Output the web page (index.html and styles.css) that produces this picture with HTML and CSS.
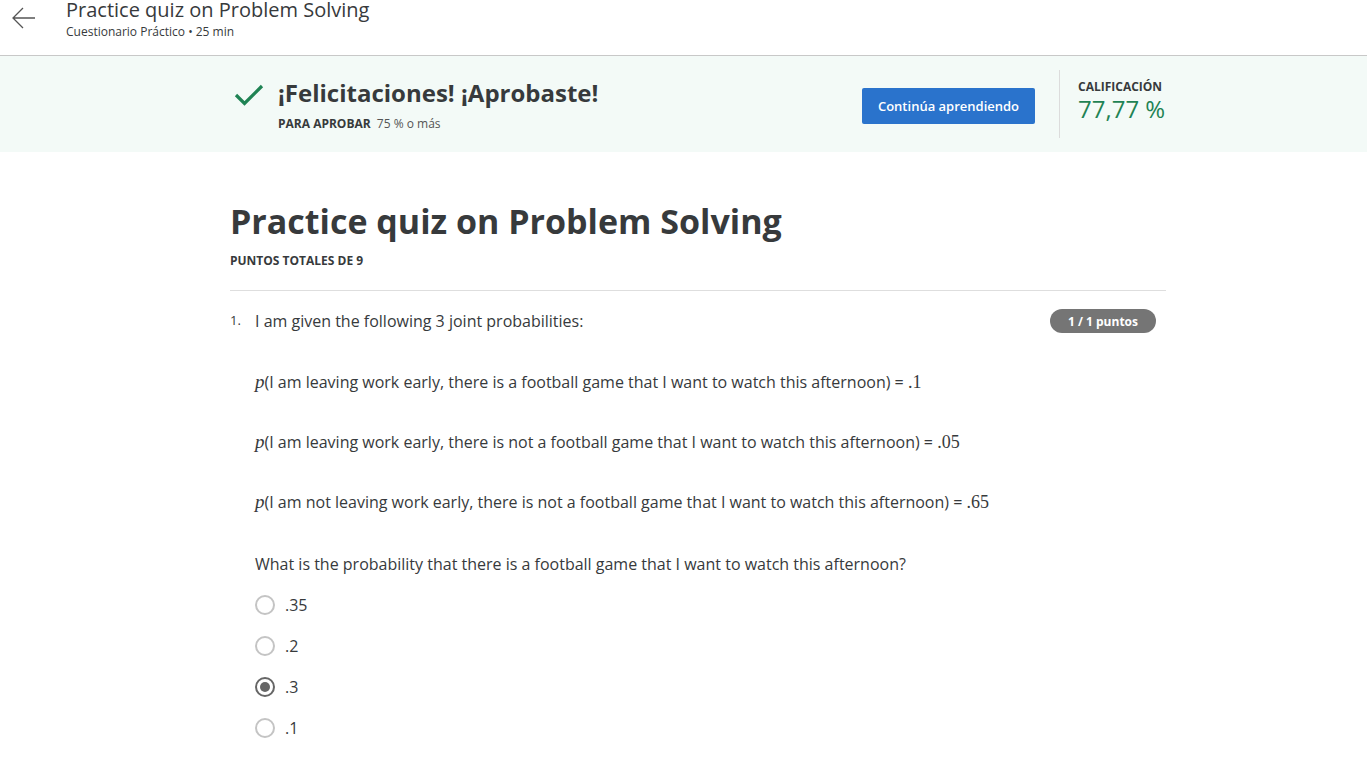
FILE: index.html
```html
<!DOCTYPE html>
<html lang="es">
<head>
<meta charset="utf-8">
<link rel="stylesheet" href="styles.css">
</head>
<body>
<header class="topbar">
  <div class="back">
    <svg width="26" height="24" viewBox="0 0 26 24"><path d="M24 12H2M12 2L2 12l10 10" fill="none" stroke="#555" stroke-width="1.3"/></svg>
  </div>
  <div class="top-titles">
    <div class="top-title">Practice quiz on Problem Solving</div>
    <div class="top-sub">Cuestionario Práctico • 25 min</div>
  </div>
</header>
<section class="banner">
  <div class="banner-inner">
    <div class="pass">
      <svg class="check" width="30" height="22" viewBox="0 0 30 22"><path d="M2 11l8.5 8.5L28 2" fill="none" stroke="#1f8354" stroke-width="3.2"/></svg>
      <div>
        <div class="pass-title">¡Felicitaciones! ¡Aprobaste!</div>
        <div class="pass-req"><b>PARA APROBAR</b> 75 % o más</div>
      </div>
    </div>
    <button class="continue">Continúa aprendiendo</button>
    <div class="divider"></div>
    <div class="grade">
      <div class="grade-label">CALIFICACIÓN</div>
      <div class="grade-value">77,77 %</div>
    </div>
  </div>
</section>
<main class="content">
  <h1 class="quiz-title">Practice quiz on Problem Solving</h1>
  <div class="total">PUNTOS TOTALES DE 9</div>
  <hr class="rule">
  <div class="question">
    <div class="qnum">1.</div>
    <div class="qbody">
      <div class="qhead">
        <p class="qtext">I am given the following 3 joint probabilities:</p>
        <span class="badge">1 / 1 puntos</span>
      </div>
      <p class="prob"><i class="m">p</i>(I am leaving work early, there is a football game that I want to watch this afternoon) = <span class="mn">.1</span></p>
      <p class="prob"><i class="m">p</i>(I am leaving work early, there is not a football game that I want to watch this afternoon) = <span class="mn">.05</span></p>
      <p class="prob"><i class="m">p</i>(I am not leaving work early, there is not a football game that I want to watch this afternoon) = <span class="mn">.65</span></p>
      <p class="ask">What is the probability that there is a football game that I want to watch this afternoon?</p>
      <ul class="options">
        <li class="opt"><span class="radio"></span>.35</li>
        <li class="opt"><span class="radio"></span>.2</li>
        <li class="opt"><span class="radio on"></span>.3</li>
        <li class="opt"><span class="radio"></span>.1</li>
      </ul>
    </div>
  </div>
</main>
</body>
</html>
```

FILE: styles.css
```css
* { box-sizing: border-box; }
html, body { margin: 0; padding: 0; background: #fff; }
body { font-family: "Open Sans", "Noto Sans", sans-serif; color: #373a3c; }

.topbar {
  height: 56px;
  border-bottom: 1px solid #c8c8c8;
  display: flex;
  align-items: flex-start;
}
.back { width: 66px; padding: 6px 0 0 11px; }
.top-title { font-size: 20px; line-height: 22px; color: #373a3c; margin-top: -1px; }
.top-sub { font-size: 12px; line-height: 16px; margin-top: 3px; color: #373a3c; }

.banner { background: #f3faf7; height: 96px; }
.banner-inner {
  width: 936px; margin-left: 230px; height: 100%;
  display: flex; align-items: center;
}
.pass { display: flex; align-items: flex-start; flex: 1; padding-left: 4px; }
.check { margin-top: 7px; margin-right: 14px; }
.pass-title { font-size: 24px; font-weight: 700; line-height: 32px; color: #373a3c; }
.pass-req { font-size: 12px; margin-top: 6px; color: #555; }
.pass-req b { color: #373a3c; margin-right: 3px; }
.continue {
  background: #2a73cc; color: #fff; border: 0; border-radius: 2px;
  font-family: inherit; font-size: 13px; font-weight: 600;
  width: 173px; height: 36px; margin: 4px 24px 0 1px; padding: 0;
}
.divider { width: 1px; height: 68px; background: #dcdcdc; margin-right: 18px; }
.grade { width: 88px; margin-top: -7px; }
.grade-label { font-size: 12px; font-weight: 700; line-height: 16px; color: #373a3c; }
.grade-value { font-size: 24px; line-height: 26px; color: #1f8354; margin-top: 1px; }

.content { width: 936px; margin-left: 230px; }
.quiz-title { font-size: 34px; font-weight: 700; margin: 44px 0 0; line-height: 50px; }
.total { font-size: 12px; font-weight: 700; margin-top: 7px; line-height: 16px; }
.rule { border: 0; border-top: 1px solid #dedede; margin: 21px 0 0; }

.question { display: flex; padding-top: 18px; }
.qnum { width: 25px; font-size: 13px; line-height: 22px; }
.qbody { flex: 1; }
.qhead { display: flex; justify-content: space-between; align-items: center; padding-right: 10px; }
.qtext, .prob, .ask { font-size: 16px; line-height: 22px; margin: 0; }
.badge {
  background: #757575; color: #fff; font-size: 12px; font-weight: 700;
  width: 106px; height: 24px; border-radius: 12px;
  display: flex; align-items: center; justify-content: center;
}
.prob { margin-top: 38px; }
.ask { margin-top: 40px; }
.m { font-family: "Liberation Serif", "DejaVu Serif", serif; font-size: 19px; }
.mn { font-family: "Liberation Serif", "DejaVu Serif", serif; font-size: 18px; }
.options { list-style: none; margin: 9px 0 0; padding: 0; }
.opt { display: flex; align-items: center; height: 41px; font-size: 16px; }
.radio {
  width: 20px; height: 20px; border-radius: 50%;
  border: 2px solid #c4c4c4; margin-right: 10px; position: relative;
}
.radio.on { border-color: #666; }
.radio.on::after {
  content: ""; position: absolute; left: 3px; top: 3px;
  width: 10px; height: 10px; border-radius: 50%; background: #666;
}
```
